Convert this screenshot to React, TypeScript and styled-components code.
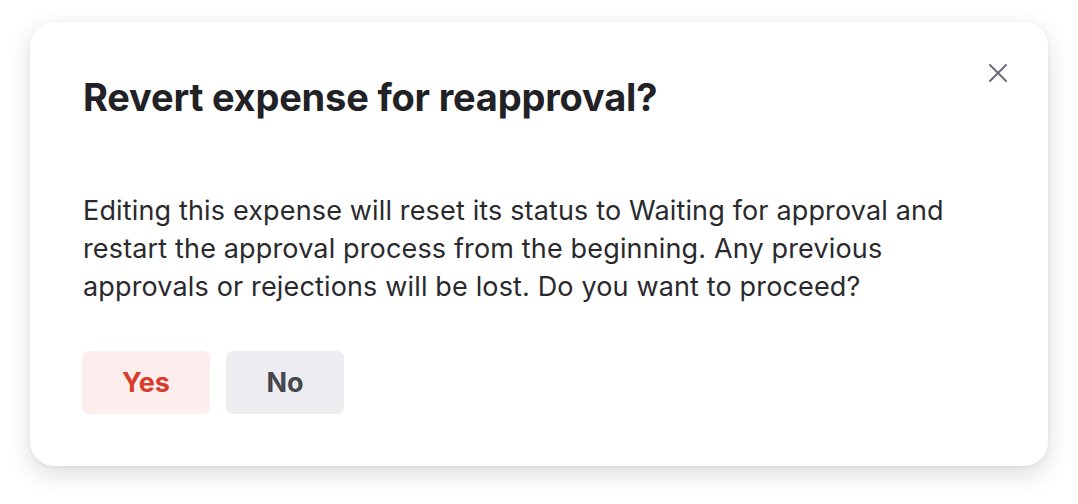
import React from "react";
import styled, { createGlobalStyle } from "styled-components";

const Global = createGlobalStyle`
  html, body { margin: 0; padding: 0; background: #ffffff; }
  body { font-family: Inter, "Liberation Sans", Arial, sans-serif; -webkit-font-smoothing: antialiased; }
`;

const Page = styled.div`
  width: 1078px;
  height: 504px;
  box-sizing: border-box;
  padding: 22px 30px 38px 30px;
  display: flex;
`;

const Card = styled.div`
  position: relative;
  flex: 1;
  box-sizing: border-box;
  background: #ffffff;
  border-radius: 24px;
  box-shadow: 0 8px 24px rgba(0, 0, 0, 0.14), 0 1px 4px rgba(0, 0, 0, 0.06);
  padding: 52px 53px 52px 52px;
  display: flex;
  flex-direction: column;
`;

const Title = styled.h1`
  margin: 0 0 0 1px;
  font-size: 38px;
  line-height: 46px;
  font-weight: 700;
  color: #222226;
  letter-spacing: -0.2px;
`;

const Body = styled.p`
  margin: 72px 0 0 1px;
  font-size: 27px;
  line-height: 38px;
  font-weight: 400;
  letter-spacing: 0.15px;
  color: #2a2a2e;
  max-width: 880px;
`;

const Actions = styled.div`
  display: flex;
  gap: 16px;
  margin-top: auto;
`;

const Button = styled.button<{ $variant: "danger" | "neutral" }>`
  height: 63px;
  border: none;
  border-radius: 7px;
  font-family: inherit;
  font-size: 27px;
  font-weight: 700;
  cursor: pointer;
  background: ${(p) => (p.$variant === "danger" ? "#fdeeee" : "#ededf1")};
  color: ${(p) => (p.$variant === "danger" ? "#d83c2c" : "#46464f")};
  width: ${(p) => (p.$variant === "danger" ? "128px" : "118px")};
`;

const Close = styled.button`
  position: absolute;
  top: 40px;
  right: 39px;
  width: 22px;
  height: 22px;
  padding: 0;
  border: none;
  background: transparent;
  display: flex;
  align-items: center;
  justify-content: center;
  cursor: pointer;
`;

export default function App() {
  return (
    <>
      <Global />
      <Page>
        <Card>
          <Close aria-label="Close">
            <svg width="20" height="20" viewBox="0 0 20 20" fill="none">
              <path d="M2 2L18 18M18 2L2 18" stroke="#6b6b7e" strokeWidth="2" strokeLinecap="round" />
            </svg>
          </Close>
          <Title>Revert expense for reapproval?</Title>
          <Body>
            Editing this expense will reset its status to Waiting for approval and restart the approval
            process from the beginning. Any previous approvals or rejections will be lost. Do you want to
            proceed?
          </Body>
          <Actions>
            <Button $variant="danger">Yes</Button>
            <Button $variant="neutral">No</Button>
          </Actions>
        </Card>
      </Page>
    </>
  );
}
